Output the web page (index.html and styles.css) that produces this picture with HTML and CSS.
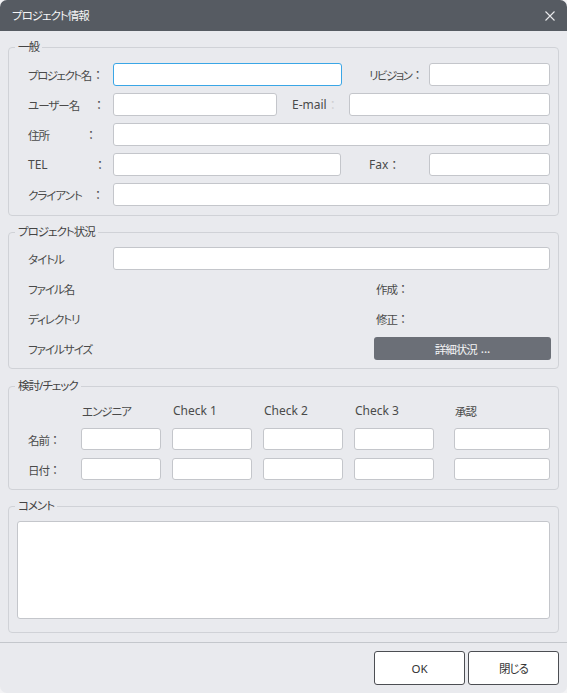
FILE: index.html
```html
<!DOCTYPE html>
<html lang="ja">
<head>
<meta charset="utf-8">
<title>プロジェクト情報</title>
<link rel="stylesheet" href="styles.css">
</head>
<body>
<div class="dialog">
  <div class="titlebar">
    <span class="title">プロジェクト情報</span>
    <button class="close" type="button" aria-label="閉じる">
      <svg width="10" height="10" viewBox="0 0 10 10"><path d="M0.5 0.5 L9.5 9.5 M9.5 0.5 L0.5 9.5" stroke="#e8e9eb" stroke-width="1.1" fill="none"/></svg>
    </button>
  </div>

  <div class="content">
    <fieldset class="group g-general">
      <legend class="legend">一般</legend>
      <div class="rows">
        <div class="row">
          <label class="lbl"><span class="lt lt-64 tight">プロジェクト名</span><span class="colon">：</span></label>
          <input class="field focused w229" type="text">
          <label class="rlbl rl-wide"><span class="tight">リビジョン</span><span class="colon">：</span></label>
          <input class="field grow" type="text">
        </div>
        <div class="row">
          <label class="lbl"><span class="lt lt-65">ユーザー名</span><span class="colon">：</span></label>
          <input class="field w164" type="text">
          <label class="rlbl rl-mail en">E-mail<span class="colon faint">：</span></label>
          <input class="field grow" type="text">
        </div>
        <div class="row">
          <label class="lbl"><span class="lt lt-57">住所</span><span class="colon">：</span></label>
          <input class="field grow" type="text">
        </div>
        <div class="row">
          <label class="lbl"><span class="lt lt-66 en">TEL</span><span class="colon">：</span></label>
          <input class="field w228" type="text">
          <label class="rlbl rl-fax en">Fax<span class="colon">：</span></label>
          <input class="field grow" type="text">
        </div>
        <div class="row">
          <label class="lbl"><span class="lt lt-64">クライアント</span><span class="colon">：</span></label>
          <input class="field grow" type="text">
        </div>
      </div>
    </fieldset>

    <fieldset class="group g-status">
      <legend class="legend">プロジェクト状況</legend>
      <div class="rows">
        <div class="row">
          <span class="lbl">タイトル</span>
          <input class="field grow" type="text">
        </div>
        <div class="row">
          <span class="lbl">ファイル名</span>
          <span class="spacer"></span>
          <span class="side">作成<span class="colon">：</span></span>
        </div>
        <div class="row">
          <span class="lbl">ディレクトリ</span>
          <span class="spacer"></span>
          <span class="side">修正<span class="colon">：</span></span>
        </div>
        <div class="row">
          <span class="lbl">ファイルサイズ</span>
          <span class="spacer"></span>
          <button class="side btn-detail" type="button">詳細状況 <span class="en">...</span></button>
        </div>
      </div>
    </fieldset>

    <fieldset class="group g-review">
      <legend class="legend">検討/チェック</legend>
      <div class="review">
        <span></span>
        <span class="head">エンジニア</span>
        <span class="head en">Check 1</span>
        <span class="head en">Check 2</span>
        <span class="head en">Check 3</span>
        <span class="head last">承認</span>

        <span class="rlabel">名前<span class="colon">：</span></span>
        <input class="field small" type="text">
        <input class="field small" type="text">
        <input class="field small" type="text">
        <input class="field small" type="text">
        <input class="field small last" type="text">

        <span class="rlabel">日付<span class="colon">：</span></span>
        <input class="field small" type="text">
        <input class="field small" type="text">
        <input class="field small" type="text">
        <input class="field small" type="text">
        <input class="field small last" type="text">
      </div>
    </fieldset>

    <fieldset class="group g-comment">
      <legend class="legend">コメント</legend>
      <textarea class="comment"></textarea>
    </fieldset>
  </div>

  <div class="footer">
    <button class="btn en" type="button">OK</button>
    <button class="btn" type="button">閉じる</button>
  </div>
</div>
</body>
</html>
```

FILE: styles.css
```css
html, body {
  margin: 0;
  padding: 0;
  background: #f3f3f5;
}

body {
  font-family: "Noto Sans", "Noto Sans CJK JP", sans-serif;
  font-size: 11.5px;
  letter-spacing: -1px;
  color: #4a4a4a;
}

.dialog {
  width: 567px;
  height: 693px;
  display: flex;
  flex-direction: column;
  background: #e9eaee;
  border-radius: 7px;
  overflow: hidden;
  font-feature-settings: "palt";
}

.en {
  font-size: 12px;
  letter-spacing: 0;
}

.tight {
  letter-spacing: -1.5px;
}

.titlebar {
  height: 31px;
  flex: none;
  background: #565b62;
  display: flex;
  align-items: center;
  justify-content: space-between;
  padding: 0 9px 0 12px;
  color: #fff;
}

.title {
  line-height: 14px;
  color: #f4f5f6;
  padding-top: 1px;
}

.close {
  width: 16px;
  height: 20px;
  padding: 0;
  border: none;
  background: transparent;
  display: flex;
  align-items: center;
  justify-content: center;
  padding-top: 1px;
}

.content {
  flex: 1;
  display: flex;
  flex-direction: column;
  gap: 9px;
  padding: 9px 8px 9px 8px;
}

.group {
  margin: 0;
  border: 1px solid #d0d2d7;
  border-radius: 4px;
  padding: 8px;
  min-width: 0;
}

.legend {
  padding: 0 3px;
  margin-left: -2px;
  line-height: 14px;
  color: #444;
}

.g-general { padding: 9px 8px 9px 8px; }
.g-status  { padding: 8px 8px 8px 8px; }
.g-review  { padding: 8px 8px 9px 8px; margin-top: 1px; }
.g-comment { padding: 8px 8px 13px 8px; }

.rows {
  display: flex;
  flex-direction: column;
  gap: 7px;
}

.row {
  display: flex;
  align-items: center;
  height: 23px;
}

.lbl {
  flex: none;
  width: 96px;
  box-sizing: border-box;
  padding-left: 11px;
  display: flex;
  align-items: center;
  white-space: nowrap;
}

.lt { flex: none; }
.lt-57 { width: 57px; }
.lt-64 { width: 64px; }
.lt-65 { width: 65px; }
.lt-66 { width: 66px; }

.colon {
  font-feature-settings: normal;
  font-family: "Noto Sans CJK JP", sans-serif;
  font-size: 12px;
  letter-spacing: 0;
}

.faint { color: #cfcfd2; }

.rlbl {
  flex: none;
  box-sizing: border-box;
  white-space: nowrap;
  display: flex;
  align-items: center;
}

.rl-wide { width: 87px; padding-left: 27px; }
.rl-fax  { width: 88px; padding-left: 28px; }
.rl-mail { width: 72px; padding-left: 15px; }

.field {
  box-sizing: border-box;
  height: 23px;
  margin: 0;
  padding: 0 4px;
  border: 1px solid #c4c6cb;
  border-radius: 3px;
  background: #fff;
  font: inherit;
  outline: none;
}

.focused { border-color: #3aa6e6; }

.w229 { width: 229px; flex: none; }
.w228 { width: 228px; flex: none; }
.w164 { width: 164px; flex: none; }

.grow { flex: 1; min-width: 0; }

.spacer { flex: 1; }

.side {
  flex: none;
  width: 177px;
  margin-right: -1px;
  box-sizing: border-box;
  padding-left: 2px;
  display: flex;
  align-items: center;
  white-space: nowrap;
}

.btn-detail {
  height: 23px;
  padding: 0;
  border: none;
  border-radius: 3px;
  background: #6b6f77;
  color: #f3f4f5;
  font: inherit;
  letter-spacing: -1px;
  justify-content: center;
  gap: 4px;
}

.review {
  display: grid;
  grid-template-columns: 53px 80px 80px 80px 80px 1fr;
  grid-template-rows: 19px 22px 22px;
  column-gap: 11px;
  row-gap: 8px;
  align-items: center;
}

.head {
  padding-left: 1px;
  white-space: nowrap;
}

.head.last {
  justify-self: end;
  width: 96px;
  box-sizing: border-box;
}

.rlabel {
  padding-left: 11px;
  white-space: nowrap;
}

.small {
  height: 22px;
  width: 100%;
}

.small.last {
  justify-self: end;
  width: 96px;
}

.comment {
  display: block;
  box-sizing: border-box;
  width: 100%;
  height: 98px;
  margin: 0;
  padding: 4px;
  border: 1px solid #c4c6cb;
  border-radius: 3px;
  background: #fff;
  resize: none;
  font: inherit;
  outline: none;
}

.footer {
  flex: none;
  border-top: 1px solid #c4c7cc;
  padding: 8px;
  display: flex;
  justify-content: flex-end;
  gap: 3px;
}

.btn {
  width: 91px;
  height: 34px;
  margin: 0;
  padding: 0;
  border: 1px solid #4c4e53;
  border-radius: 3px;
  background: #fff;
  color: #333;
  font: inherit;
  letter-spacing: -1px;
}

.btn.en {
  letter-spacing: 0;
}
```
